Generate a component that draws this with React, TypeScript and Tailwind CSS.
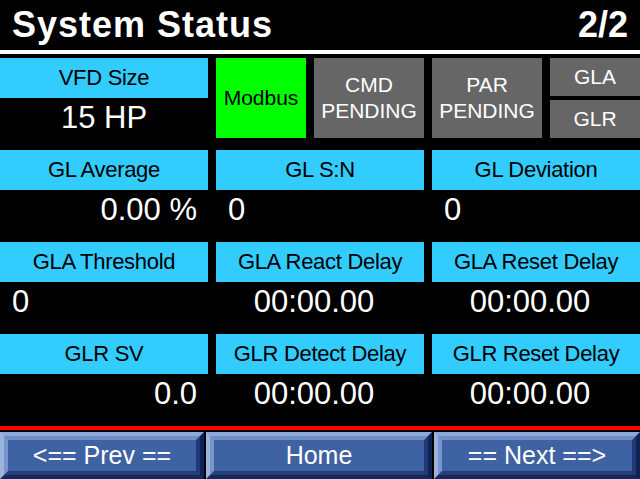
import React from 'react';

type Cell = {
  label: string;
  value: string;
  align: 'left' | 'right' | 'center';
};

const rows: Cell[][] = [
  [
    { label: 'GL Average', value: '0.00 %', align: 'right' },
    { label: 'GL S:N', value: '0', align: 'left' },
    { label: 'GL Deviation', value: '0', align: 'left' },
  ],
  [
    { label: 'GLA Threshold', value: '0', align: 'left' },
    { label: 'GLA React Delay', value: '00:00.00', align: 'center' },
    { label: 'GLA Reset Delay', value: '00:00.00', align: 'center' },
  ],
  [
    { label: 'GLR SV', value: '0.0', align: 'right' },
    { label: 'GLR Detect Delay', value: '00:00.00', align: 'center' },
    { label: 'GLR Reset Delay', value: '00:00.00', align: 'center' },
  ],
];

function Label({ children }: { children: React.ReactNode }) {
  return (
    <div className="h-10 bg-[#33ccff] text-black text-[22px] tracking-[-0.3px] leading-none flex items-center justify-center whitespace-nowrap">
      {children}
    </div>
  );
}

function NavButton({ label, className }: { label: string; className?: string }) {
  return (
    <button
      className={`h-full border-4 border-t-[#8ea9d9] border-l-[#9ab4de] border-b-[#14285c] border-r-[#0f2155] ${className ?? ''}`}
    >
      <div className="h-full border-4 border-t-[#6f8fc7] border-l-[#7896cb] border-b-[#263f7c] border-r-[#1f3a76] bg-[#3f62a2] flex items-center justify-center text-white text-[25px] leading-none whitespace-nowrap">
        {label}
      </div>
    </button>
  );
}

export default function App() {
  return (
    <div className="w-[640px] h-[479px] bg-black flex flex-col overflow-hidden font-['Liberation_Sans',Arial,sans-serif]">
      {/* header */}
      <div className="h-[50px] flex items-center justify-between px-3 text-white text-[36px] font-bold leading-9 tracking-[1px]">
        <span>System Status</span>
        <span className="tracking-normal">2/2</span>
      </div>
      <div className="h-1 bg-white" />

      {/* top row */}
      <div className="mt-1 grid grid-cols-3 gap-x-2 h-[80px]">
        <div>
          <Label>VFD Size</Label>
          <div className="pt-1 text-white text-[31px] leading-8 text-center">15 HP</div>
        </div>
        <div className="flex gap-2">
          <div className="w-[90px] bg-[#00ff00] text-black text-[21px] flex items-center justify-center">
            Modbus
          </div>
          <div className="flex-1 bg-[#666666] text-white text-[21px] leading-[26px] flex items-center justify-center text-center whitespace-nowrap">
            CMD<br />PENDING
          </div>
        </div>
        <div className="flex gap-2">
          <div className="flex-1 bg-[#666666] text-white text-[21px] leading-[26px] flex items-center justify-center text-center whitespace-nowrap">
            PAR<br />PENDING
          </div>
          <div className="w-[90px] flex flex-col gap-1">
            <div className="h-[38px] bg-[#666666] text-white text-[21px] flex items-center justify-center">GLA</div>
            <div className="h-[38px] bg-[#666666] text-white text-[21px] flex items-center justify-center">GLR</div>
          </div>
        </div>
      </div>

      {/* data rows */}
      <div className="mt-3 flex flex-col">
        {rows.map((row, i) => (
          <div key={i} className="grid grid-cols-3 gap-x-2">
            {row.map((c) => (
              <div key={c.label}>
                <Label>{c.label}</Label>
                <div
                  className={`h-[52px] pt-1 text-white text-[31px] leading-8 whitespace-nowrap ${
                    c.align === 'left'
                      ? 'text-left pl-3'
                      : c.align === 'right'
                      ? 'text-right pr-[11px]'
                      : 'text-center pr-3'
                  }`}
                >
                  {c.value}
                </div>
              </div>
            ))}
          </div>
        ))}
      </div>

      {/* footer */}
      <div className="h-1 bg-[#ff0000]" />
      <div className="h-[2px]" />
      <div className="flex-1 flex gap-[2px]">
        <NavButton label="<== Prev ==" className="w-[204px]" />
        <NavButton label="Home" className="w-[226px]" />
        <NavButton label="== Next ==>" className="flex-1" />
      </div>
    </div>
  );
}
